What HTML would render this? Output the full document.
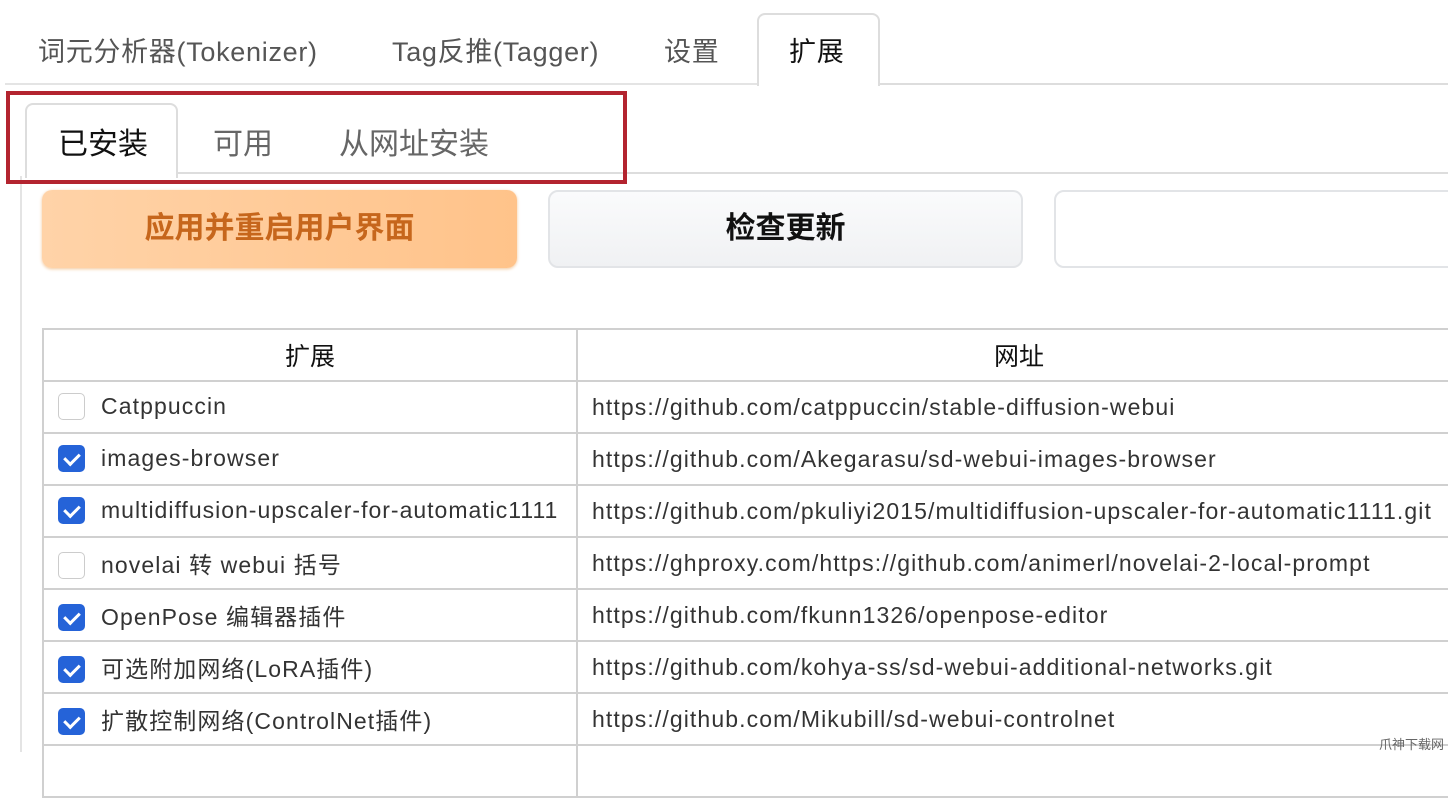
<!DOCTYPE html>
<html><head><meta charset="utf-8"><style>
*{margin:0;padding:0;box-sizing:border-box}
body{width:1448px;height:752px;overflow:hidden;background:#fff;font-family:"Liberation Sans","Noto Sans CJK SC",sans-serif;position:relative;color:#222}
.a{position:absolute}
.t{font-size:27px;color:#555;top:30px;white-space:nowrap;letter-spacing:0.7px}
td{border:2px solid #d0d0d0;height:52px;font-size:23px;padding:0 14px;white-space:nowrap;color:#333;letter-spacing:1.1px}
th{border:2px solid #d0d0d0;height:52px;font-size:25px;font-weight:normal;color:#111}
.cb{display:inline-block;width:27px;height:27px;border:1.5px solid #ccc;border-radius:5px;vertical-align:middle;margin-right:16px;position:relative;top:-1px}
.cb.on{background:#2563d8;border-color:#2563d8}
.cb.on::after{content:"";position:absolute;left:8px;top:4px;width:7px;height:12px;border:solid #fff;border-width:0 3.5px 3.5px 0;transform:rotate(45deg)}
</style></head><body>
<div class="a t" style="left:38px">词元分析器(Tokenizer)</div>
<div class="a t" style="left:392px">Tag反推(Tagger)</div>
<div class="a t" style="left:664px">设置</div>
<div class="a" style="left:757px;top:13px;width:123px;height:73px;border:2px solid #ddd;border-bottom:none;border-radius:8px 8px 0 0;background:#fff"></div>
<div class="a t" style="left:789px;color:#111">扩展</div>
<div class="a" style="left:5px;top:83px;width:752px;height:2px;background:#e4e4e4"></div>
<div class="a" style="left:880px;top:83px;width:568px;height:2px;background:#ddd"></div>
<div class="a" style="left:20px;top:176px;width:2px;height:576px;background:#e4e4e4"></div>
<div class="a" style="left:178px;top:172px;width:1270px;height:2px;background:#ddd"></div>
<div class="a" style="left:25px;top:103px;width:153px;height:75px;border:2px solid #ddd;border-bottom:none;border-radius:8px 8px 0 0;background:#fff"></div>
<div class="a t" style="left:58px;top:119px;color:#111;font-size:30px;letter-spacing:0">已安装</div>
<div class="a t" style="left:213px;top:119px;color:#666;font-size:30px;letter-spacing:0">可用</div>
<div class="a t" style="left:339px;top:119px;color:#666;font-size:30px;letter-spacing:0">从网址安装</div>
<div class="a" style="left:6px;top:91px;width:621px;height:93px;border:4px solid #b3242f"></div>
<div class="a" style="left:42px;top:190px;width:475px;height:78px;border-radius:10px;background:linear-gradient(90deg,#ffd3a8,#ffc38a);box-shadow:0 1px 3px #f2c79a;text-align:center;line-height:78px;font-size:30px;color:#c6661c;font-weight:bold">应用并重启用户界面</div>
<div class="a" style="left:548px;top:190px;width:475px;height:78px;border-radius:10px;background:linear-gradient(#fafbfc,#f0f1f3);border:2px solid #e2e4e7;text-align:center;line-height:74px;font-size:30px;color:#111;font-weight:bold">检查更新</div>
<div class="a" style="left:1054px;top:190px;width:420px;height:78px;border-radius:10px;border:2px solid #e2e4e7"></div>
<table class="a" style="left:42px;top:328px;border-collapse:collapse;width:1420px">
<tr><th style="width:534px">扩展</th><th>网址</th></tr>
<tr><td><span class="cb"></span>Catppuccin</td><td>https://github.com/catppuccin/stable-diffusion-webui</td></tr>
<tr><td><span class="cb on"></span>images-browser</td><td>https://github.com/Akegarasu/sd-webui-images-browser</td></tr>
<tr><td style="letter-spacing:1px"><span class="cb on"></span>multidiffusion-upscaler-for-automatic1111</td><td>https://github.com/pkuliyi2015/multidiffusion-upscaler-for-automatic1111.git</td></tr>
<tr><td><span class="cb"></span>novelai 转 webui 括号</td><td>https://ghproxy.com/https://github.com/animerl/novelai-2-local-prompt</td></tr>
<tr><td><span class="cb on"></span>OpenPose 编辑器插件</td><td>https://github.com/fkunn1326/openpose-editor</td></tr>
<tr><td><span class="cb on"></span>可选附加网络(LoRA插件)</td><td>https://github.com/kohya-ss/sd-webui-additional-networks.git</td></tr>
<tr><td><span class="cb on"></span>扩散控制网络(ControlNet插件)</td><td>https://github.com/Mikubill/sd-webui-controlnet</td></tr>
<tr><td></td><td></td></tr>
</table>
<div class="a" style="right:4px;top:734px;font-size:13px;color:#666">爪神下载网</div>
</body></html>
